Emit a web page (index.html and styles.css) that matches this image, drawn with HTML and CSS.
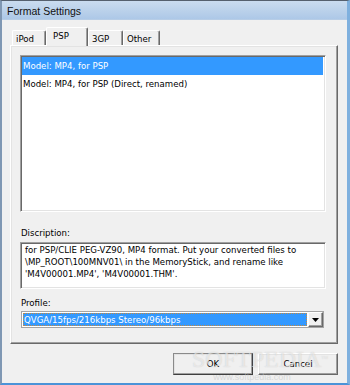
FILE: index.html
```html
<!DOCTYPE html>
<html>
<head>
<meta charset="utf-8">
<title>Format Settings</title>
<link rel="stylesheet" href="styles.css">
</head>
<body>
<div class="window">
  <div class="titlebar">Format Settings</div>
  <div class="client">
    <div class="tabs">
      <div class="tab w-ipod">iPod</div>
      <div class="tab sel w-psp">PSP</div>
      <div class="tab w-3gp">3GP</div>
      <div class="tab w-other">Other</div>
    </div>
    <div class="panel">
      <div class="listbox">
        <div class="item selected">Model: MP4, for PSP</div>
        <div class="item">Model: MP4, for PSP (Direct, renamed)</div>
      </div>
      <div class="label first">Discription:</div>
      <div class="desc">for PSP/CLIE PEG-VZ90, MP4 format. Put your converted files to<br>\MP_ROOT\100MNV01\ in the MemoryStick, and rename like<br>'M4V00001.MP4', 'M4V00001.THM'.</div>
      <div class="label second">Profile:</div>
      <div class="combo">
        <div class="combo-value">QVGA/15fps/216kbps Stereo/96kbps</div>
        <div class="combo-btn"><svg width="7" height="4" viewBox="0 0 7 4"><path d="M0 0h7L3.5 4z" fill="#000"/></svg></div>
      </div>
    </div>
    <div class="buttons">
      <div class="btn default">OK</div>
      <div class="btn">Cancel</div>
    </div>
  </div>
  <div class="watermark">
    <div class="wm-big">SOFTPEDIA<span class="tm">™</span></div>
    <div class="wm-small">www.softpedia.com</div>
  </div>
</div>
</body>
</html>
```

FILE: styles.css
```css
* { box-sizing: border-box; }
html, body { margin: 0; padding: 0; }
body {
  width: 350px;
  height: 385px;
  overflow: hidden;
  font-family: "DejaVu Sans Condensed", "Liberation Sans", Arial, sans-serif;
  font-size: 9.55px;
  color: #000;
  background: #f0f0f0;
}
.window {
  position: relative;
  width: 350px;
  height: 385px;
  display: flex;
  flex-direction: column;
  background: #f0f0f0;
  border-top: 1px solid #55606e;
  border-left: 2px solid #7f97b3;
  border-right: 3px solid #7fb0de;
  border-bottom: 2px solid #4b93d8;
}
.titlebar {
  height: 19px;
  flex: none;
  line-height: 20px;
  padding-left: 5px;
  font-family: "Liberation Sans", Arial, sans-serif;
  font-size: 10.5px;
  color: #111;
  background: linear-gradient(#cadcef, #adc8e7);
  border-bottom: 1px solid #b7cde6;
}
.client {
  flex: 1;
  padding: 7px 9px 0 8px;
  display: flex;
  flex-direction: column;
}
.tabs {
  height: 18px;
  display: flex;
  align-items: flex-end;
  padding-left: 2px;
}
.tab {
  height: 15px;
  line-height: 15px;
  padding-left: 3px;
  background: #f0f0f0;
  border-top: 1px solid #fff;
  border-left: 1px solid #fff;
  border-right: 1px solid #696969;
  box-shadow: inset -1px 0 #a0a0a0;
  border-radius: 2px 2px 0 0;
  white-space: nowrap;
}
.tab.sel {
  height: 19px;
  line-height: 15px;
  margin-bottom: -1px;
  padding-left: 6px;
  position: relative;
  z-index: 2;
}
.w-ipod { width: 34px; }
.w-psp { width: 42px; }
.w-3gp { width: 35px; }
.w-other { width: 37px; }
.panel {
  height: 299px;
  width: 328px;
  border: 1px solid;
  border-color: #fff #696969 #696969 #fff;
  box-shadow: inset -1px -1px #a0a0a0, inset 1px 1px #e3e3e3;
  padding: 9px 11px 0 9px;
  display: flex;
  flex-direction: column;
}
.listbox {
  height: 157px;
  background: #fff;
  border: 1px solid;
  border-color: #a0a0a0 #fff #fff #a0a0a0;
  box-shadow: inset 1px 1px #696969, inset -1px -1px #e3e3e3;
  padding: 1px 2px 1px 1px;
}
.item {
  height: 18px;
  line-height: 18px;
  padding-left: 1px;
  white-space: nowrap;
}
.item.selected {
  background: #3399ff;
  color: #fff;
}
.label {
  height: 12px;
  line-height: 12px;
  padding-left: 1px;
}
.label.first { margin-top: 15px; }
.label.second { margin-top: 8px; }
.desc {
  margin-top: 3px;
  height: 47px;
  background: #fff;
  border: 1px solid;
  border-color: #a0a0a0 #fff #fff #a0a0a0;
  box-shadow: inset 1px 1px #696969, inset -1px -1px #e3e3e3;
  padding: 1px 4px;
  line-height: 12.2px;
  white-space: nowrap;
}
.combo {
  margin-top: 2px;
  margin-left: 1px;
  width: 303px;
  height: 17px;
  background: #fff;
  border: 1px solid #a5a5a5;
  display: flex;
}
.combo-value {
  flex: 1;
  margin: 1px;
  background: #3399ff;
  color: #fff;
  outline: 1px dotted #c98a3e;
  outline-offset: -1px;
  line-height: 13px;
  padding-left: 1px;
  white-space: nowrap;
}
.combo-btn {
  width: 15px;
  display: flex;
  align-items: center;
  justify-content: center;
  background: #f0f0f0;
  border: 1px solid;
  border-color: #fff #696969 #696969 #fff;
  box-shadow: inset -1px -1px #a0a0a0;
}
.buttons {
  margin-top: 9px;
  display: flex;
  justify-content: flex-end;
  gap: 5px;
}
.btn {
  width: 80px;
  height: 22px;
  line-height: 20px;
  text-align: center;
  background: #f0f0f0;
  border: 1px solid;
  border-color: #fff #696969 #696969 #fff;
  box-shadow: inset -1px -1px #a0a0a0, inset 1px 1px #e3e3e3;
}
.btn.default {
  border-color: #8a8a8a #404040 #404040 #8a8a8a;
}
.watermark {
  position: absolute;
  left: 190px;
  top: 345px;
  width: 120px;
  text-align: center;
  pointer-events: none;
  color: rgba(255, 255, 255, 0.55);
  text-shadow: 0 0 1px rgba(120, 120, 120, 0.35);
}
.wm-big {
  font-family: "Liberation Serif", serif;
  font-size: 24px;
  line-height: 26px;
}
.tm { font-size: 7px; vertical-align: top; }
.wm-small {
  font-family: "Liberation Sans", Arial, sans-serif;
  font-size: 9px;
  line-height: 10px;
  color: rgba(200, 200, 200, 0.6);
  text-shadow: none;
}
```
